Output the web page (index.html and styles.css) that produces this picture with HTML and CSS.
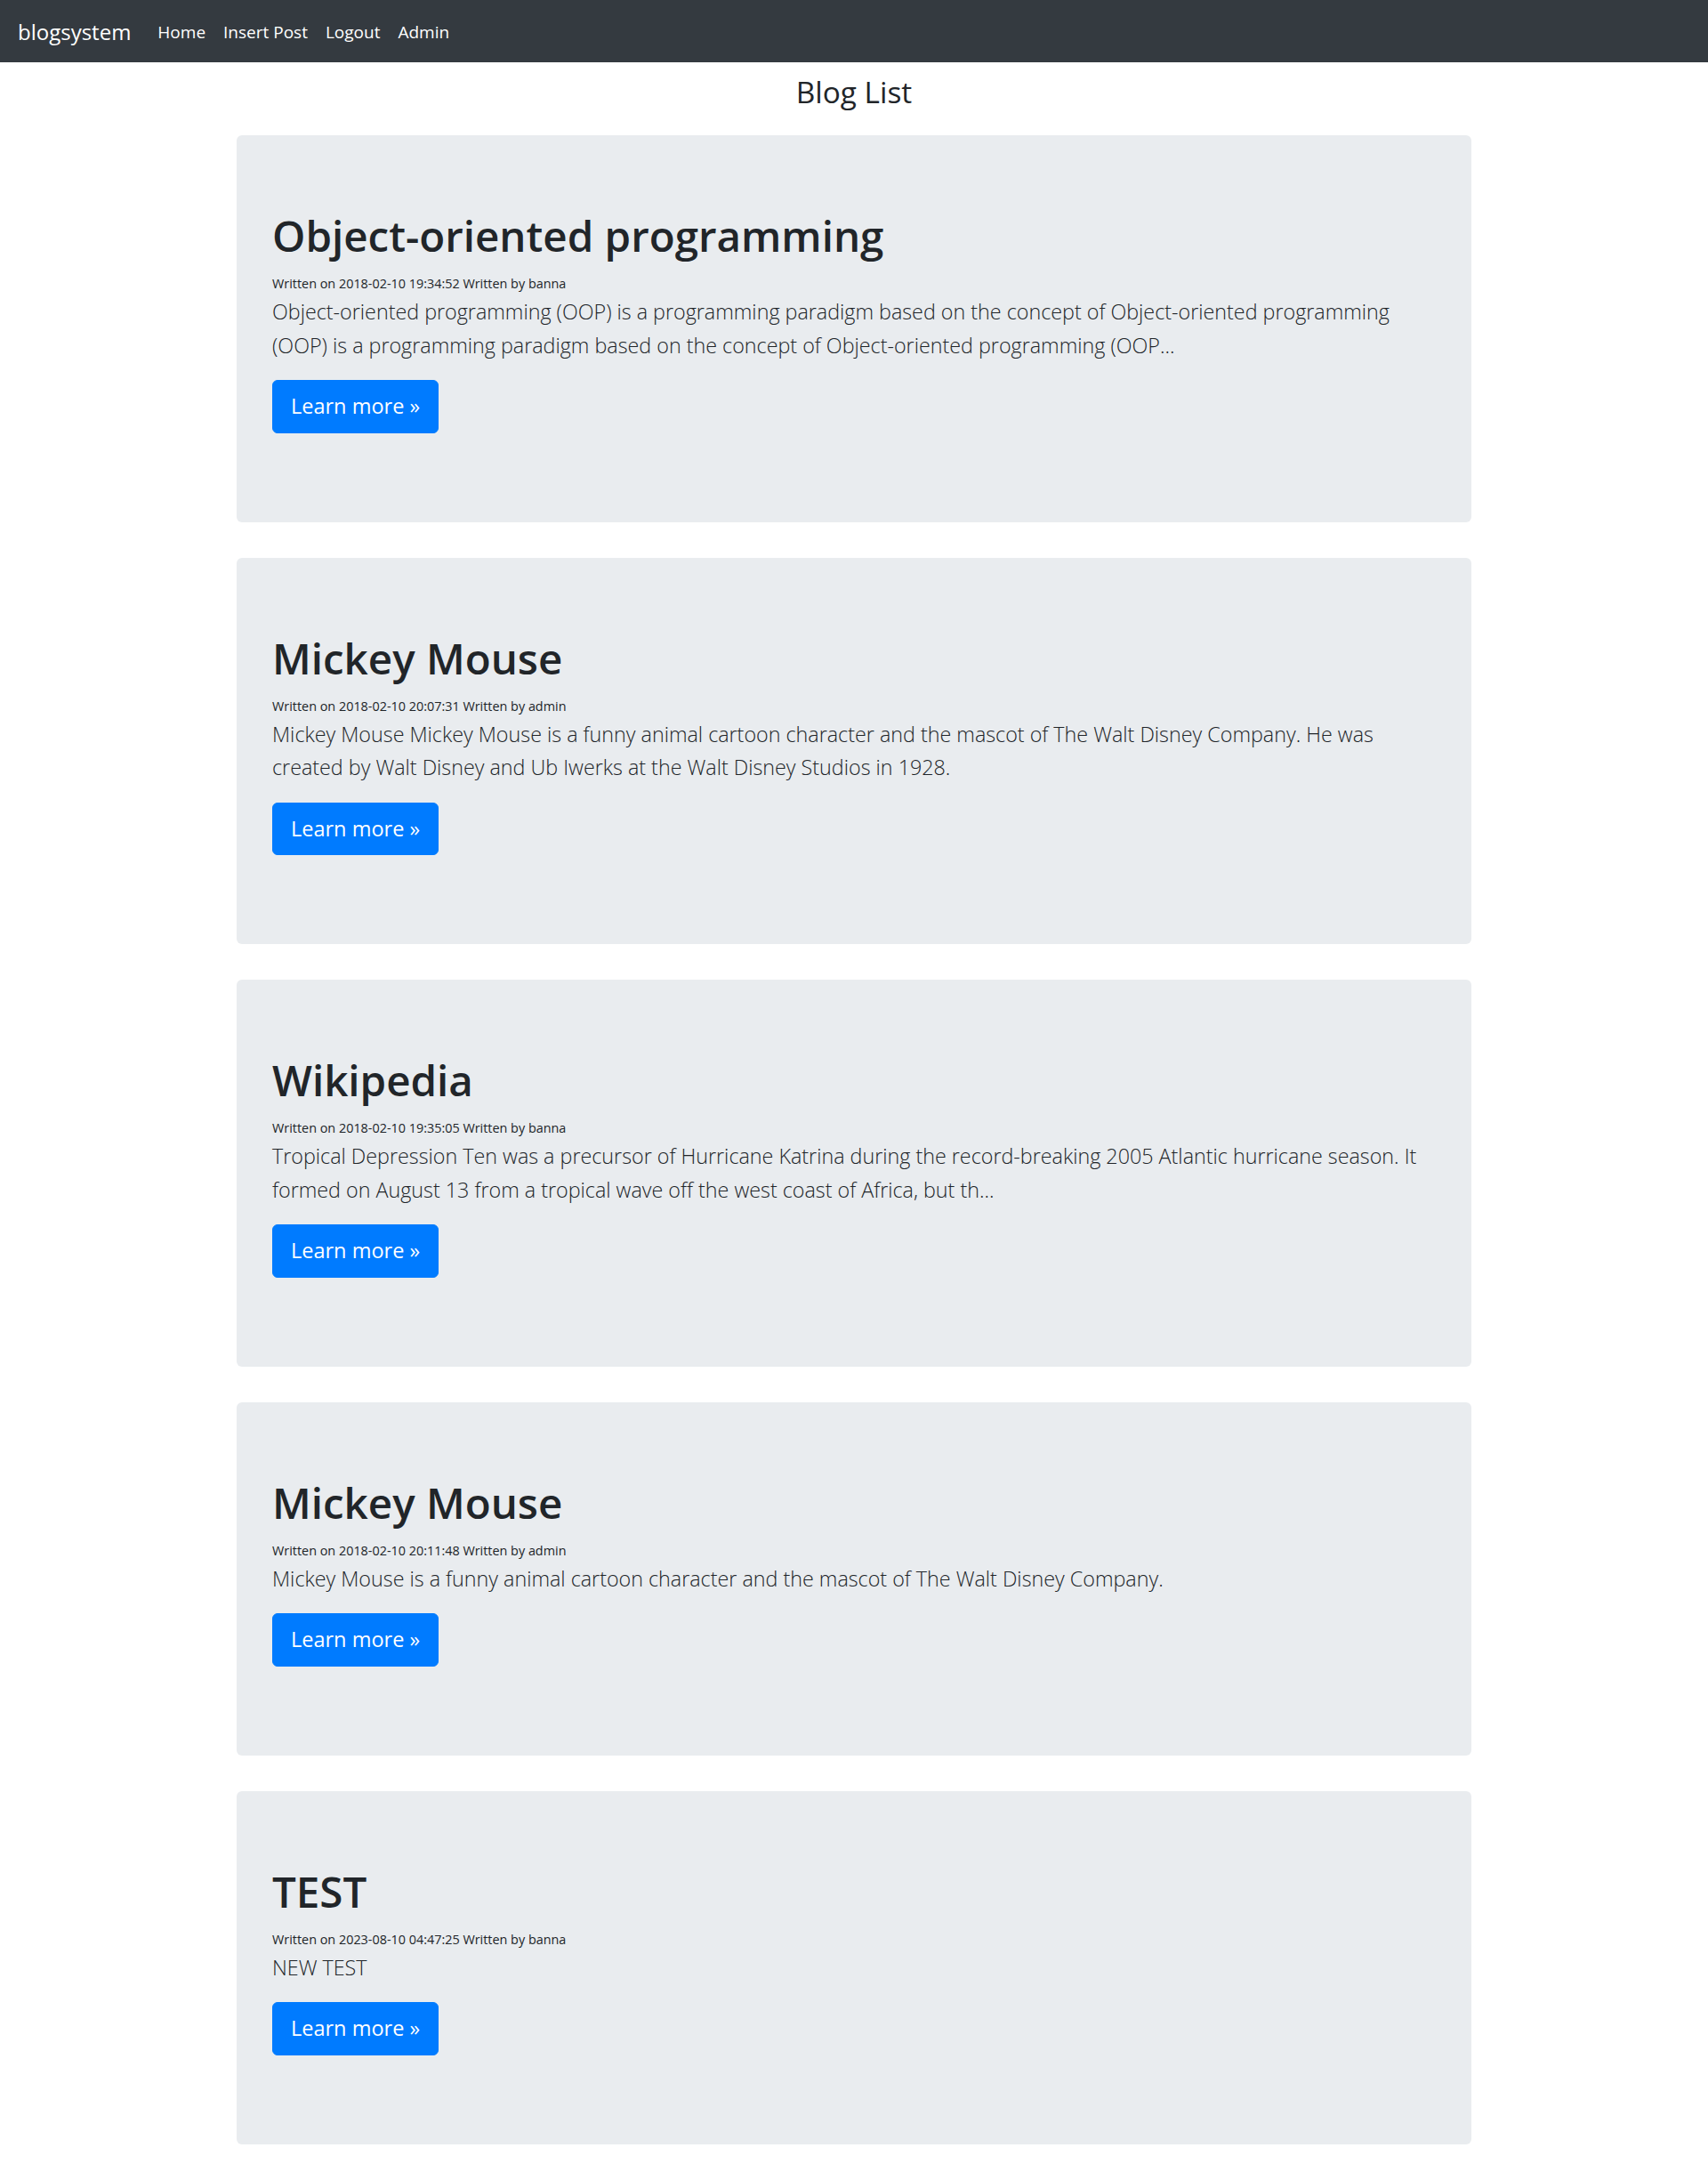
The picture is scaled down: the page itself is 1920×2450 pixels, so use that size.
FILE: index.html
```html
<!DOCTYPE html>
<html lang="en">
<head>
<meta charset="utf-8">
<title>blogsystem</title>
<link rel="stylesheet" href="styles.css">
</head>
<body>
<nav class="navbar">
  <a class="brand" href="#">blogsystem</a>
  <ul class="nav">
    <li><a class="nav-link" href="#">Home</a></li>
    <li><a class="nav-link" href="#">Insert Post</a></li>
    <li><a class="nav-link" href="#">Logout</a></li>
    <li><a class="nav-link" href="#">Admin</a></li>
  </ul>
</nav>
<main class="container">
  <h3 class="page-title">Blog List</h3>

  <section class="jumbotron">
    <h1 class="post-title">Object-oriented programming</h1>
    <div class="meta"><small>Written on 2018-02-10 19:34:52 Written by banna</small></div>
    <p class="lead">Object-oriented programming (OOP) is a programming paradigm based on the concept of Object-oriented programming (OOP) is a programming paradigm based on the concept of Object-oriented programming (OOP...</p>
    <p class="actions"><a class="btn" href="#">Learn more &raquo;</a></p>
  </section>

  <section class="jumbotron">
    <h1 class="post-title">Mickey Mouse</h1>
    <div class="meta"><small>Written on 2018-02-10 20:07:31 Written by admin</small></div>
    <p class="lead">Mickey Mouse Mickey Mouse is a funny animal cartoon character and the mascot of The Walt Disney Company. He was created by Walt Disney and Ub Iwerks at the Walt Disney Studios in 1928.</p>
    <p class="actions"><a class="btn" href="#">Learn more &raquo;</a></p>
  </section>

  <section class="jumbotron">
    <h1 class="post-title">Wikipedia</h1>
    <div class="meta"><small>Written on 2018-02-10 19:35:05 Written by banna</small></div>
    <p class="lead">Tropical Depression Ten was a precursor of Hurricane Katrina during the record-breaking 2005 Atlantic hurricane season. It formed on August 13 from a tropical wave off the west coast of Africa, but th...</p>
    <p class="actions"><a class="btn" href="#">Learn more &raquo;</a></p>
  </section>

  <section class="jumbotron">
    <h1 class="post-title">Mickey Mouse</h1>
    <div class="meta"><small>Written on 2018-02-10 20:11:48 Written by admin</small></div>
    <p class="lead">Mickey Mouse is a funny animal cartoon character and the mascot of The Walt Disney Company.</p>
    <p class="actions"><a class="btn" href="#">Learn more &raquo;</a></p>
  </section>

  <section class="jumbotron">
    <h1 class="post-title">TEST</h1>
    <div class="meta"><small>Written on 2023-08-10 04:47:25 Written by banna</small></div>
    <p class="lead">NEW TEST</p>
    <p class="actions"><a class="btn" href="#">Learn more &raquo;</a></p>
  </section>
</main>
</body>
</html>
```

FILE: styles.css
```css
* { box-sizing: border-box; }

html, body {
  margin: 0;
  padding: 0;
}

body {
  font-family: "Segoe UI", "Open Sans", "Noto Sans", Arial, sans-serif;
  font-size: 20px;
  line-height: 1.5;
  color: #212529;
  background: #fff;
}

a { text-decoration: none; }

.navbar {
  display: flex;
  align-items: center;
  height: 70px;
  padding: 11px 20px 9px;
  background: #343a40;
}

.brand {
  font-size: 24px;
  line-height: 37.5px;
  padding: 6px 0;
  margin-right: 20px;
  color: #fff;
  white-space: nowrap;
}

.nav {
  display: flex;
  list-style: none;
  margin: 0;
  padding: 0;
}

.nav-link {
  display: block;
  padding: 10px;
  font-size: 19px;
  line-height: 30px;
  color: #fff;
}

.container {
  max-width: 1426px;
  margin: 0 auto;
  padding: 0 19px;
}

.page-title {
  margin: 12px 0 28px;
  font-size: 33.4px;
  font-weight: 400;
  line-height: 42px;
  text-align: center;
}

.jumbotron {
  background: #e9ecef;
  border-radius: 6px;
  padding: 80px 40px;
  margin-bottom: 40px;
}

.post-title {
  margin: 0 0 7px;
  padding-top: 3px;
  font-size: 47.5px;
  font-weight: 600;
  line-height: 60px;
}

.meta {
  height: 30px;
}

.meta small {
  font-size: 14.4px;
}

.lead {
  margin: 0 0 20px;
  font-size: 23.3px;
  font-weight: 300;
  line-height: 37.5px;
}

.actions {
  margin: 0 0 20px;
}

.btn {
  display: inline-block;
  padding: 10px 20px;
  font-size: 23.5px;
  line-height: 37.5px;
  color: #fff;
  background: #007bff;
  border: 1px solid #007bff;
  border-radius: 6px;
  vertical-align: middle;
}
```
